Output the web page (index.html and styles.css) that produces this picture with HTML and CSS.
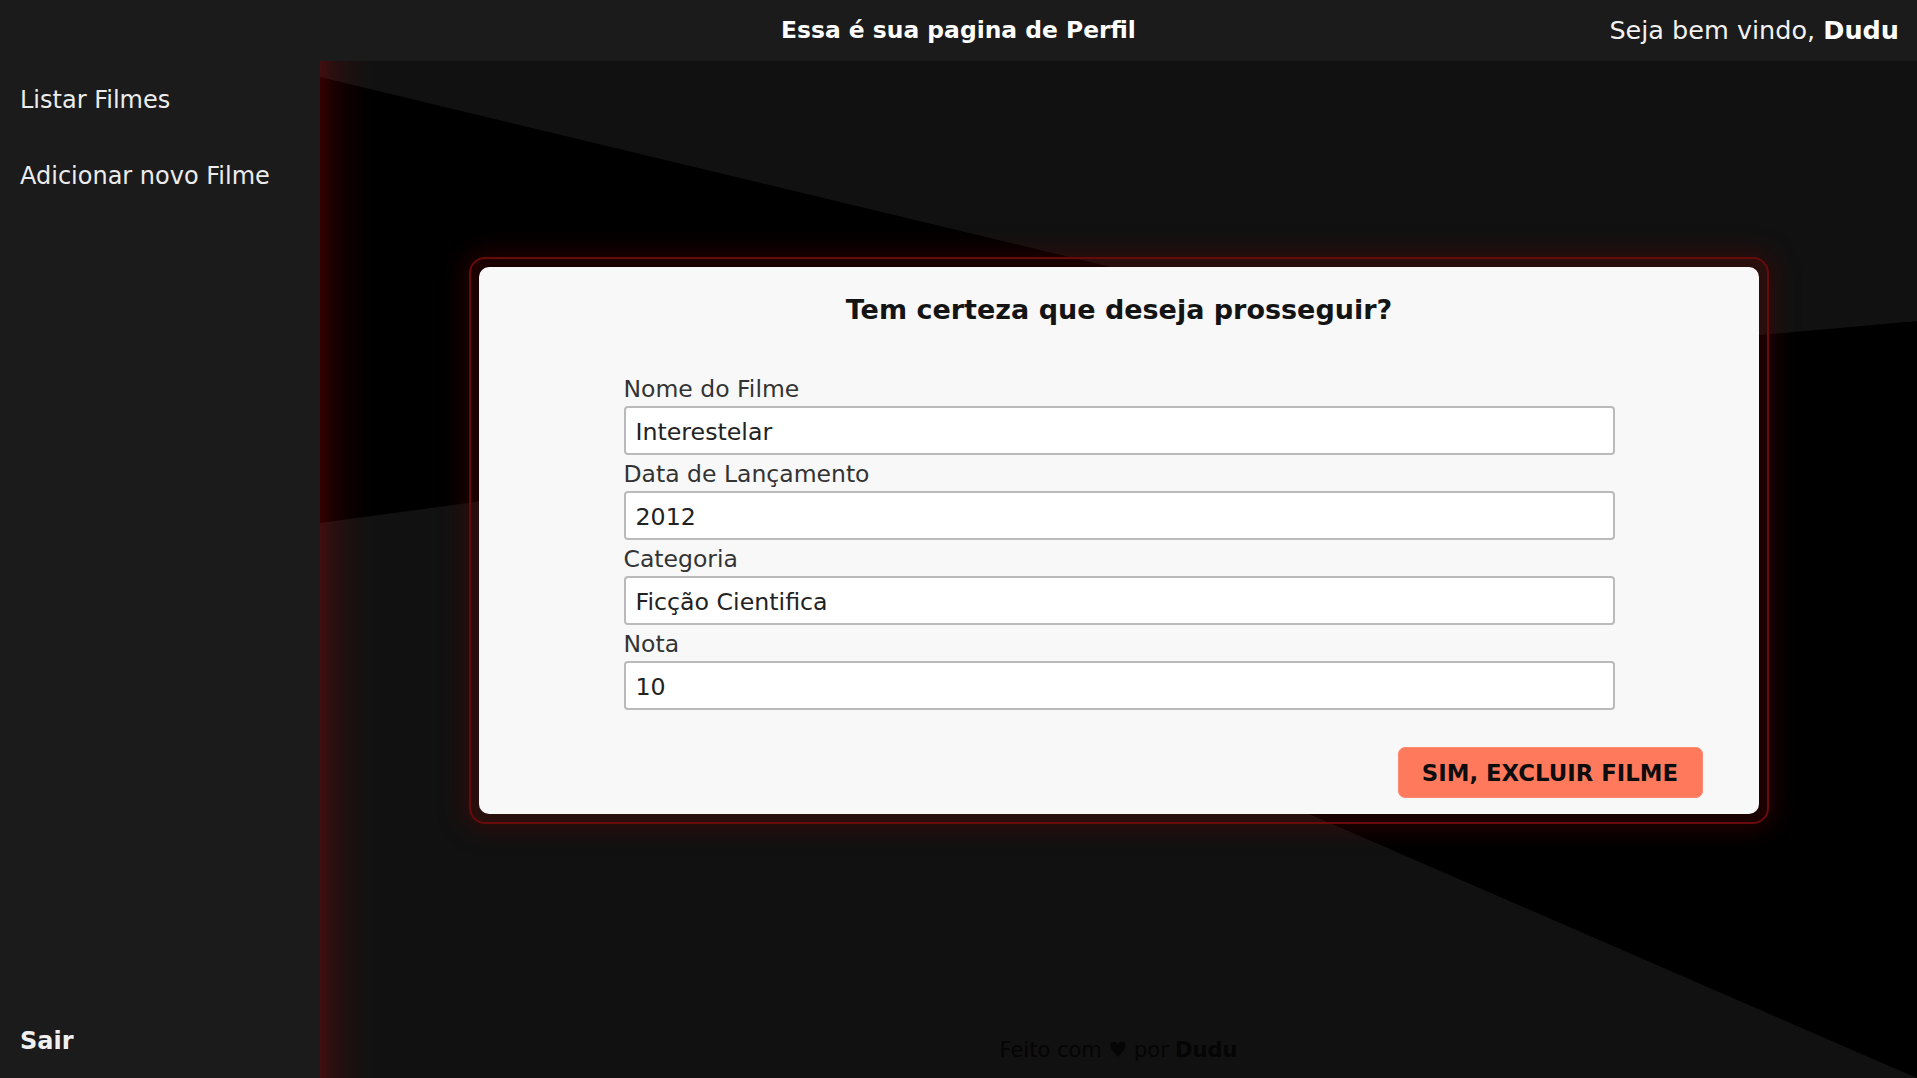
FILE: index.html
```html
<!DOCTYPE html>
<html lang="pt-BR">
<head>
<meta charset="utf-8">
<title>Perfil</title>
<link rel="stylesheet" href="styles.css">
</head>
<body>
<div class="app">
  <header class="topbar">
    <div class="topbar-spacer"></div>
    <h1 class="page-title">Essa é sua pagina de Perfil</h1>
    <div class="welcome">Seja bem vindo, <strong>Dudu</strong></div>
  </header>
  <aside class="sidebar">
    <nav class="nav">
      <a class="nav-link" href="#">Listar Filmes</a>
      <a class="nav-link" href="#">Adicionar novo Filme</a>
    </nav>
    <a class="logout" href="#">Sair</a>
  </aside>
  <main class="main">
    <svg class="bg-shape" viewBox="0 0 1597 1017" preserveAspectRatio="none" aria-hidden="true">
      <polygon points="0,16 1174,298 1597,260 1597,1017 243,429 0,462" fill="#000"/>
    </svg>
    <div class="glow"></div>
    <div class="stage">
      <div class="modal-frame">
        <div class="modal-card">
          <h2 class="modal-title">Tem certeza que deseja prosseguir?</h2>
          <form class="movie-form">
            <label class="field">
              <span class="field-label">Nome do Filme</span>
              <input class="field-input" type="text" value="Interestelar">
            </label>
            <label class="field">
              <span class="field-label">Data de Lançamento</span>
              <input class="field-input" type="text" value="2012">
            </label>
            <label class="field">
              <span class="field-label">Categoria</span>
              <input class="field-input" type="text" value="Ficção Cientifica">
            </label>
            <label class="field">
              <span class="field-label">Nota</span>
              <input class="field-input" type="text" value="10">
            </label>
          </form>
          <div class="actions">
            <button class="btn-danger" type="button">SIM, EXCLUIR FILME</button>
          </div>
        </div>
      </div>
    </div>
    <footer class="footer">Feito com ♥ por <strong>Dudu</strong></footer>
  </main>
</div>
</body>
</html>
```

FILE: styles.css
```css
* { box-sizing: border-box; }

html, body {
  margin: 0;
  padding: 0;
  height: 100%;
}

body {
  background: #111111;
  font-family: "DejaVu Sans", "Liberation Sans", sans-serif;
  color: #eeeeee;
  overflow: hidden;
}

.app {
  display: grid;
  grid-template-columns: 320px 1fr;
  grid-template-rows: 61px 1fr;
  height: 100vh;
}

.topbar {
  grid-column: 1 / -1;
  background: #1b1b1b;
  display: grid;
  grid-template-columns: 1fr auto 1fr;
  align-items: center;
  padding-bottom: 2px;
}

.page-title {
  margin: 0;
  font-size: 23.4px;
  font-weight: 700;
  color: #ffffff;
  line-height: 30px;
}

.welcome {
  justify-self: end;
  padding-right: 18px;
  font-size: 25.5px;
  line-height: 30px;
  color: #f2f2f2;
}

.welcome strong { color: #ffffff; font-weight: 700; }

.sidebar {
  background: #1b1b1b;
  display: flex;
  flex-direction: column;
  padding: 24px 20px 22px;
}

.nav {
  display: flex;
  flex-direction: column;
  gap: 46px;
}

.nav-link {
  color: #ececec;
  text-decoration: none;
  font-size: 24px;
  line-height: 30px;
}

.logout {
  margin-top: auto;
  color: #f0f0f0;
  text-decoration: none;
  font-size: 24px;
  font-weight: 700;
  line-height: 30px;
}

.main {
  position: relative;
  overflow: hidden;
  background: #111111;
  display: flex;
  flex-direction: column;
}

.bg-shape {
  position: absolute;
  inset: 0;
  width: 100%;
  height: 100%;
  display: block;
  z-index: 0;
}

.glow {
  position: absolute;
  left: 0;
  top: 0;
  bottom: 0;
  width: 70px;
  z-index: 1;
  pointer-events: none;
  background: linear-gradient(90deg,
    rgba(210, 0, 0, 0.25) 0,
    rgba(210, 0, 0, 0.14) 12px,
    rgba(210, 0, 0, 0.05) 30px,
    rgba(210, 0, 0, 0) 55px);
}

.stage {
  position: relative;
  z-index: 2;
  flex: 1;
  display: flex;
  align-items: center;
  justify-content: center;
}

.modal-frame {
  width: 1300px;
  border: 2px solid #6a0b0b;
  border-radius: 16px;
  padding: 8px;
  background: rgba(170, 0, 0, 0.16);
  box-shadow: 0 0 26px 5px rgba(100, 0, 0, 0.38);
}

.modal-card {
  background: #f8f8f8;
  border-radius: 10px;
  padding: 26px 56px 16px 57px;
  color: #222222;
}

.modal-title {
  margin: 0;
  text-align: center;
  font-size: 27px;
  line-height: 34px;
  font-weight: 700;
  color: #141414;
}

.movie-form {
  width: 991px;
  margin: 43px auto 0;
  display: flex;
  flex-direction: column;
}

.field {
  display: flex;
  flex-direction: column;
}

.field-label {
  font-size: 23.5px;
  line-height: 34px;
  padding-top: 2px;
  color: #333333;
}

.field-input {
  height: 49px;
  width: 100%;
  border: 2px solid #bababa;
  border-radius: 4px;
  background: #ffffff;
  padding: 3px 9px 0 10px;
  font-family: inherit;
  font-size: 23.7px;
  color: #222222;
  outline: none;
}

.actions {
  display: flex;
  justify-content: flex-end;
  margin-top: 37px;
}

.btn-danger {
  width: 305px;
  height: 51px;
  border: 1px solid #ff8a70;
  border-radius: 7px;
  background: #ff7a5c;
  color: #0d0d0d;
  font-family: inherit;
  font-size: 22.8px;
  font-weight: 700;
  padding: 0;
  cursor: pointer;
}

.footer {
  position: relative;
  z-index: 2;
  height: 58px;
  display: flex;
  align-items: center;
  justify-content: center;
  padding-top: 2px;
  font-size: 21px;
  color: #050505;
}

.footer strong { font-weight: 700; margin-left: 0.3em; }
```
